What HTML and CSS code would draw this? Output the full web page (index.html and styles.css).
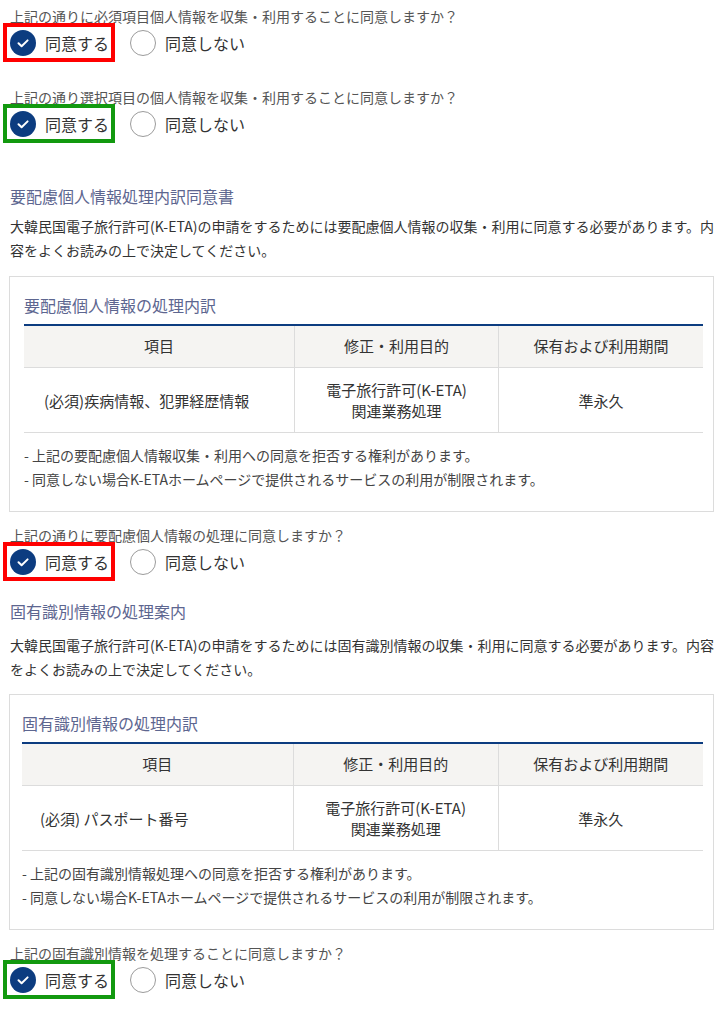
FILE: index.html
```html
<!DOCTYPE html>
<html lang="ja">
<head>
<meta charset="utf-8">
<title>同意</title>
<link rel="stylesheet" href="styles.css">
</head>
<body>
<div class="page">

  <div class="qblock first">
    <p class="q">上記の通りに必須項目個人情報を収集・利用することに同意しますか？</p>
    <div class="radios">
      <label class="opt hl-red"><span class="dot on"><svg viewBox="0 0 26 26" width="26" height="26"><circle cx="13" cy="13" r="13" fill="#0c3c80"/><path d="M8.5 13.2 L11.6 16.2 L17.6 10.4" fill="none" stroke="#fff" stroke-width="2" stroke-linecap="round" stroke-linejoin="round"/></svg></span><span class="lbl">同意する</span></label>
      <label class="opt"><span class="dot off"></span><span class="lbl">同意しない</span></label>
    </div>
  </div>

  <div class="qblock second">
    <p class="q">上記の通り選択項目の個人情報を収集・利用することに同意しますか？</p>
    <div class="radios">
      <label class="opt hl-green"><span class="dot on"><svg viewBox="0 0 26 26" width="26" height="26"><circle cx="13" cy="13" r="13" fill="#0c3c80"/><path d="M8.5 13.2 L11.6 16.2 L17.6 10.4" fill="none" stroke="#fff" stroke-width="2" stroke-linecap="round" stroke-linejoin="round"/></svg></span><span class="lbl">同意する</span></label>
      <label class="opt"><span class="dot off"></span><span class="lbl">同意しない</span></label>
    </div>
  </div>

  <section class="sec sec1">
    <h2 class="sec-title">要配慮個人情報処理内訳同意書</h2>
    <p class="para">大韓民国電子旅行許可(K-ETA)の申請をするためには要配慮個人情報の収集・利用に同意する必要があります。内容をよくお読みの上で決定してください。</p>
    <div class="box">
      <h3 class="box-title">要配慮個人情報の処理内訳</h3>
      <table class="tbl">
        <colgroup><col class="c1"><col class="c2"><col class="c3"></colgroup>
        <thead>
          <tr><th>項目</th><th>修正・利用目的</th><th>保有および利用期間</th></tr>
        </thead>
        <tbody>
          <tr><td>(必須)疾病情報、犯罪経歴情報</td><td>電子旅行許可(K-ETA)<br>関連業務処理</td><td>準永久</td></tr>
        </tbody>
      </table>
      <ul class="notes">
        <li>- 上記の要配慮個人情報収集・利用への同意を拒否する権利があります。</li>
        <li>- 同意しない場合K-ETAホームページで提供されるサービスの利用が制限されます。</li>
      </ul>
    </div>
    <div class="qblock after-box">
      <p class="q">上記の通りに要配慮個人情報の処理に同意しますか？</p>
      <div class="radios">
        <label class="opt hl-red"><span class="dot on"><svg viewBox="0 0 26 26" width="26" height="26"><circle cx="13" cy="13" r="13" fill="#0c3c80"/><path d="M8.5 13.2 L11.6 16.2 L17.6 10.4" fill="none" stroke="#fff" stroke-width="2" stroke-linecap="round" stroke-linejoin="round"/></svg></span><span class="lbl">同意する</span></label>
        <label class="opt"><span class="dot off"></span><span class="lbl">同意しない</span></label>
      </div>
    </div>
  </section>

  <section class="sec sec2">
    <h2 class="sec-title">固有識別情報の処理案内</h2>
    <p class="para">大韓民国電子旅行許可(K-ETA)の申請をするためには固有識別情報の収集・利用に同意する必要があります。内容をよくお読みの上で決定してください。</p>
    <div class="box">
      <h3 class="box-title">固有識別情報の処理内訳</h3>
      <table class="tbl">
        <colgroup><col class="c1"><col class="c2"><col class="c3"></colgroup>
        <thead>
          <tr><th>項目</th><th>修正・利用目的</th><th>保有および利用期間</th></tr>
        </thead>
        <tbody>
          <tr><td>(必須) パスポート番号</td><td>電子旅行許可(K-ETA)<br>関連業務処理</td><td>準永久</td></tr>
        </tbody>
      </table>
      <ul class="notes">
        <li>- 上記の固有識別情報処理への同意を拒否する権利があります。</li>
        <li>- 同意しない場合K-ETAホームページで提供されるサービスの利用が制限されます。</li>
      </ul>
    </div>
    <div class="qblock after-box">
      <p class="q">上記の固有識別情報を処理することに同意しますか？</p>
      <div class="radios">
        <label class="opt hl-green"><span class="dot on"><svg viewBox="0 0 26 26" width="26" height="26"><circle cx="13" cy="13" r="13" fill="#0c3c80"/><path d="M8.5 13.2 L11.6 16.2 L17.6 10.4" fill="none" stroke="#fff" stroke-width="2" stroke-linecap="round" stroke-linejoin="round"/></svg></span><span class="lbl">同意する</span></label>
        <label class="opt"><span class="dot off"></span><span class="lbl">同意しない</span></label>
      </div>
    </div>
  </section>

</div>
</body>
</html>
```

FILE: styles.css
```css
* { box-sizing: border-box; }
html, body { margin: 0; padding: 0; background: #fff; }
body {
  font-family: "Noto Sans CJK JP", "Noto Sans", sans-serif;
  color: #333;
  width: 720px;
}
.page { padding: 6px 0 20px 10px; }

p, h2, h3, ul { margin: 0; padding: 0; }

.q {
  font-size: 14px;
  line-height: 20px;
  color: #555;
}
.qblock.second { margin-top: 29px; }
.qblock.after-box { margin-top: 13px; }

.radios {
  display: flex;
  gap: 16px;
  margin: 1px 0 0 -3px;
}
.opt {
  display: inline-flex;
  align-items: center;
  gap: 9px;
  height: 31px;
  padding: 0 2px 0 3px;
  cursor: pointer;
}
.hl-red { outline: 4px solid #ff0000; }
.hl-green { outline: 4px solid #12990f; }
.dot { width: 26px; height: 26px; flex: none; display: block; border-radius: 50%; }
.dot svg { display: block; }
.dot.off { border: 1px solid #9b9b9b; background: #fff; }
.lbl { font-size: 16px; line-height: 20px; color: #333; }

.sec-title {
  font-size: 16px;
  line-height: 22px;
  font-weight: normal;
  color: #5d6690;
}
.sec1 { margin-top: 46px; }
.sec2 { margin-top: 23px; }
.sec1 .para { margin-top: 7px; }
.sec2 .para { margin-top: 11px; }
.para {
  font-size: 14px;
  line-height: 24px;
  color: #333;
}
.sec1 .box { margin-top: 14px; }
.sec2 .box { margin-top: 13px; padding-left: 12px; }

.box {
  margin-right: 6px;
  margin-left: -1px;
  border: 1px solid #dcdcdc;
  padding: 17px 10px 20px 14px;
}
.box-title {
  font-size: 16px;
  line-height: 22px;
  font-weight: normal;
  color: #5d6690;
}
.tbl {
  margin-top: 8px;
  width: 100%;
  border-collapse: collapse;
  table-layout: fixed;
  border-top: 2px solid #0c3c80;
  font-size: 15px;
  color: #333;
}
.tbl col.c1 { width: 270px; }
.tbl col.c2 { width: 204px; }
.tbl col.c3 { width: 204px; }
.tbl th {
  font-weight: normal;
  background: #f5f4f2;
  line-height: 20px;
  padding: 10px 4px 11px;
  border-bottom: 1px solid #dcdcdc;
  border-left: 1px solid #dcdcdc;
  text-align: center;
}
.tbl td {
  line-height: 21px;
  padding: 11px 4px;
  border-bottom: 1px solid #dcdcdc;
  border-left: 1px solid #dcdcdc;
  text-align: center;
}
.tbl td:first-child { text-align: left; padding-left: 20px; }
.sec2 .tbl td:first-child { padding-left: 18px; }
.tbl th:first-child, .tbl td:first-child { border-left: none; }

.notes {
  list-style: none;
  margin-top: 10px;
  font-size: 14px;
  line-height: 24px;
  color: #444;
}
```
